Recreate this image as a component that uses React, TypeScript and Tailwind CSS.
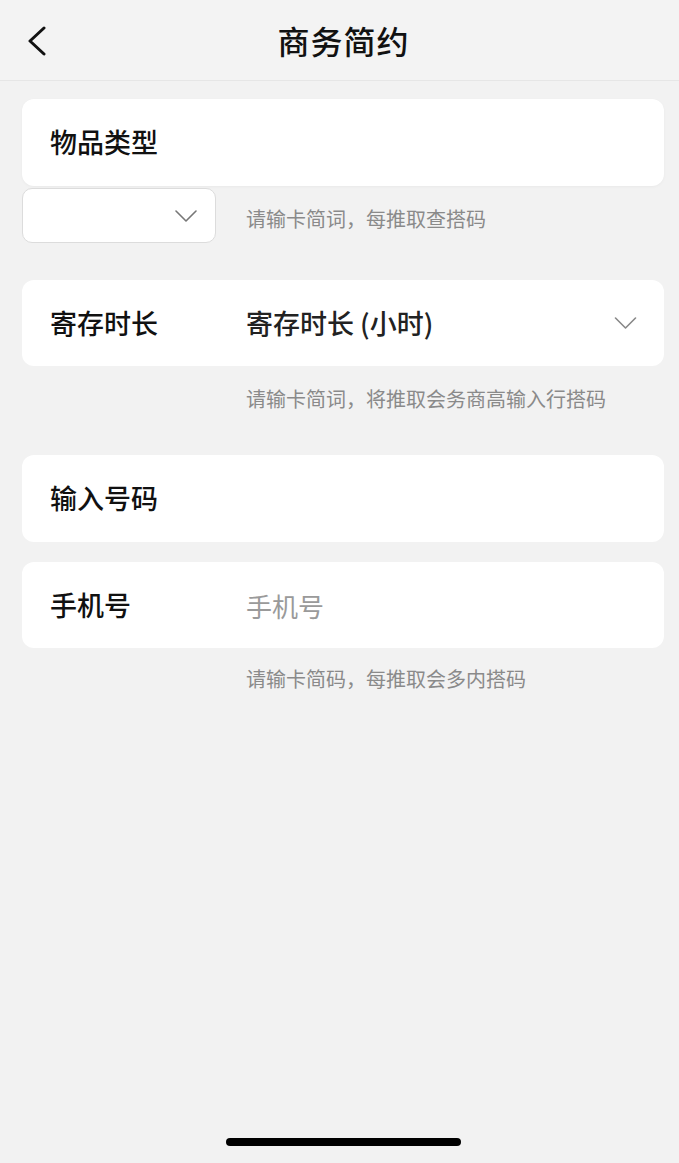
const font = { fontFamily: '"Noto Sans CJK SC", "Noto Sans", sans-serif' }

function Chevron({ className }: { className: string }) {
  return (
    <svg viewBox="0 0 22 12" className={className} fill="none" stroke="currentColor" strokeWidth="1.6" strokeLinecap="round" strokeLinejoin="round">
      <path d="M1 1l10 10 10-10" />
    </svg>
  )
}

function Hint({ children }: { children: string }) {
  return <p className="pl-[224px] text-[20px] leading-[28px] text-[#8a8a8a]">{children}</p>
}

export default function App() {
  return (
    <div style={font} className="flex min-h-[1163px] flex-col bg-[#f2f2f2] text-[#111]">
      <header className="relative flex h-[81px] items-center justify-center border-b border-[#e6e6e6] bg-[#f3f3f3]">
        <button type="button" className="absolute left-[27px] top-[26px] text-[#111]">
          <svg viewBox="0 0 20 30" className="h-[30px] w-[20px]" fill="none" stroke="currentColor" strokeWidth="3" strokeLinecap="round" strokeLinejoin="round">
            <path d="M17 2L3 15l14 13" />
          </svg>
        </button>
        <h1 className="ml-[8px] text-[32px] font-medium tracking-[1px]">商务简约</h1>
      </header>

      <main className="flex flex-col pl-[22px] pr-[15px] pt-[18px]">
        <div className="flex h-[87px] items-center rounded-[12px] bg-white px-[28px] shadow-[0_1px_3px_rgba(0,0,0,0.04)]">
          <span className="text-[27px] font-medium">物品类型</span>
        </div>

        <div className="mt-[2px] flex items-center">
          <div className="flex h-[55px] w-[194px] items-center justify-end rounded-[10px] border border-[#dcdcdc] bg-white pr-[18px]">
            <Chevron className="h-[12px] w-[22px] text-[#777]" />
          </div>
          <span className="ml-[30px] pt-[6px] text-[20px] text-[#8a8a8a]">请输卡简词，每推取查搭码</span>
        </div>

        <div className="mt-[37px] flex h-[86px] items-center rounded-[12px] bg-white pl-[28px] pr-[27px]">
          <span className="w-[196px] text-[27px] font-medium">寄存时长</span>
          <span className="flex-1 text-[27px] font-medium text-[#222]">寄存时长 (小时)</span>
          <Chevron className="h-[12px] w-[23px] text-[#888]" />
        </div>
        <div className="mt-[19px]">
          <Hint>请输卡简词，将推取会务商高输入行搭码</Hint>
        </div>

        <div className="mt-[42px] flex h-[87px] items-center rounded-[12px] bg-white px-[28px]">
          <span className="text-[27px] font-medium">输入号码</span>
        </div>

        <div className="mt-[20px] flex h-[86px] items-center rounded-[12px] bg-white px-[28px]">
          <span className="w-[196px] text-[27px] font-medium">手机号</span>
          <span className="text-[26px] text-[#9a9a9a]">手机号</span>
        </div>
        <div className="mt-[17px]">
          <Hint>请输卡简码，每推取会多内搭码</Hint>
        </div>
      </main>

      <div className="mt-auto flex justify-center pb-[17px]">
        <div className="ml-[7px] h-[8px] w-[235px] rounded-full bg-black" />
      </div>
    </div>
  )
}
